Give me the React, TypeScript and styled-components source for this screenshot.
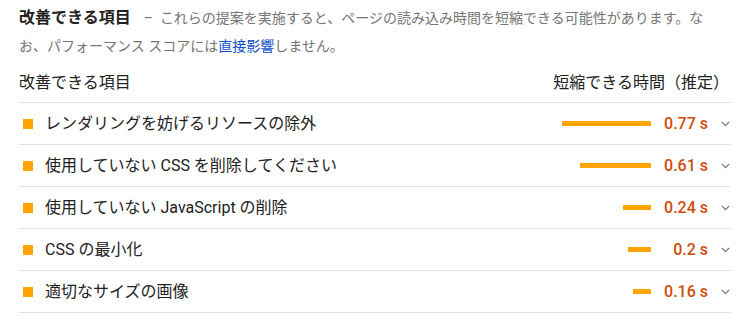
import React from "react";
import styled, { createGlobalStyle } from "styled-components";

const GlobalStyle = createGlobalStyle`
  html, body { margin: 0; padding: 0; background: #ffffff; }
  body {
    font-family: Roboto, "Noto Sans CJK JP", "Noto Sans", sans-serif;
    color: #212121;
    -webkit-font-smoothing: antialiased;
  }
`;

const Wrapper = styled.div`
  width: 712px;
  padding: 4px 14px 0 19px;
`;

const Intro = styled.div`
  width: 692px;
  line-height: 28px;
  font-size: 14px;
  color: #757575;
`;

const GroupTitle = styled.span`
  font-size: 16px;
  font-weight: 700;
  color: #212121;
`;

const Separator = styled.span`
  margin: 0 7px 0 13px;
  color: #757575;
`;

const Link = styled.a`
  color: #0c50c7;
  text-decoration: none;
`;

const HeaderRow = styled.div`
  display: flex;
  justify-content: space-between;
  align-items: center;
  font-size: 16px;
  line-height: 24px;
  color: #212121;
  padding: 11px 2px 7px 0;
  border-bottom: 1px solid #e0e0e0;
`;

const Row = styled.div`
  display: flex;
  align-items: center;
  height: 41px;
  border-bottom: 1px solid #e0e0e0;
`;

const Marker = styled.span`
  width: 10px;
  height: 10px;
  margin-left: 4px;
  margin-right: 12px;
  background: #ffa400;
  flex: none;
`;

const Label = styled.span`
  flex: 1;
  font-size: 16px;
  line-height: 24px;
  color: #212121;
  white-space: nowrap;
`;

const BarTrack = styled.div`
  width: 100px;
  display: flex;
  justify-content: flex-end;
  flex: none;
`;

const Bar = styled.div`
  height: 5px;
  background: #ffa400;
`;

const Value = styled.span`
  width: 57px;
  text-align: right;
  font-size: 16px;
  font-weight: 500;
  color: #cf4c0c;
  flex: none;
`;

const Chevron = styled.span`
  width: 23px;
  display: flex;
  justify-content: flex-end;
  padding-right: 1px;
  box-sizing: border-box;
  flex: none;
`;

type Item = { label: React.ReactNode; value: number };

const items: Item[] = [
  { label: "レンダリングを妨げるリソースの除外", value: 0.77 },
  { label: "使用していない CSS を削除してください", value: 0.61 },
  { label: "使用していない JavaScript の削除", value: 0.24 },
  { label: "CSS の最小化", value: 0.2 },
  { label: "適切なサイズの画像", value: 0.16 },
];

const maxValue = 0.77;
const maxBar = 89;

const ChevronIcon = () => (
  <svg width="9" height="6" viewBox="0 0 9 6" aria-hidden="true">
    <path d="M0.8 0.9 L4.5 4.6 L8.2 0.9" fill="none" stroke="#757575" strokeWidth="1.3" />
  </svg>
);

export default function App() {
  return (
    <>
      <GlobalStyle />
      <Wrapper>
        <Intro>
          <GroupTitle>改善できる項目</GroupTitle>
          <Separator>–</Separator>
          これらの提案を実施すると、ページの読み込み時間を短縮できる可能性があります。なお、パフォーマンス スコアには
          <Link href="#">直接影響</Link>
          しません。
        </Intro>
        <HeaderRow>
          <span>改善できる項目</span>
          <span>短縮できる時間（推定）</span>
        </HeaderRow>
        {items.map((item, i) => (
          <Row key={i}>
            <Marker />
            <Label>{item.label}</Label>
            <BarTrack>
              <Bar style={{ width: `${Math.round((item.value / maxValue) * maxBar)}px` }} />
            </BarTrack>
            <Value>{item.value} s</Value>
            <Chevron>
              <ChevronIcon />
            </Chevron>
          </Row>
        ))}
      </Wrapper>
    </>
  );
}
